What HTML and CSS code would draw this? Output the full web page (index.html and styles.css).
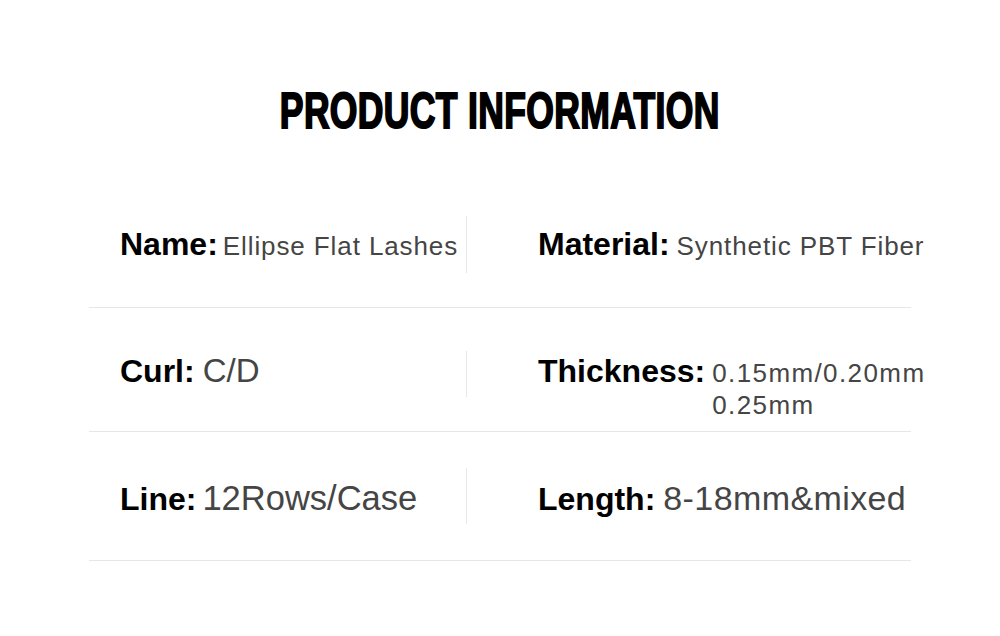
FILE: index.html
```html
<!DOCTYPE html>
<html lang="en">
<head>
<meta charset="utf-8">
<title>Product Information</title>
<link rel="stylesheet" href="styles.css">
</head>
<body>
<main class="page">
  <h1 class="title"><span class="title-text">PRODUCT INFORMATION</span></h1>
  <section class="table">
    <div class="row row-1">
      <div class="cell cell-left">
        <span class="label">Name:</span><span class="value v-name tight">Ellipse Flat Lashes</span>
      </div>
      <div class="cell cell-right">
        <span class="label">Material:</span><span class="value v-material">Synthetic PBT Fiber</span>
      </div>
    </div>
    <div class="row row-2">
      <div class="cell cell-left">
        <span class="label">Curl:</span><span class="value v-curl">C/D</span>
      </div>
      <div class="cell cell-right">
        <span class="label">Thickness:</span><span class="value v-thick tight">0.15mm/0.20mm<br>0.25mm</span>
      </div>
    </div>
    <div class="row row-3">
      <div class="cell cell-left">
        <span class="label">Line:</span><span class="value v-line">12Rows/Case</span>
      </div>
      <div class="cell cell-right">
        <span class="label">Length:</span><span class="value v-length">8-18mm&amp;mixed</span>
      </div>
    </div>
  </section>
</main>
</body>
</html>
```

FILE: styles.css
```css
html, body {
  margin: 0;
  padding: 0;
  background: #ffffff;
}

body {
  font-family: "Liberation Sans", Arial, sans-serif;
  color: #000;
}

.page {
  width: 1000px;
  height: 636px;
  padding-top: 81px;
  box-sizing: border-box;
}

.title {
  margin: 0 0 43px 0;
  text-align: center;
  font-size: 50px;
  line-height: 60px;
  font-weight: 700;
}

.title-text {
  display: inline-block;
  transform: scaleX(0.71);
  transform-origin: center;
  -webkit-text-stroke: 2px #000;
  letter-spacing: 0.5px;
}

.table {
  width: 822px;
  margin: 0 auto;
}

.row {
  display: grid;
  grid-template-columns: 378px 1fr;
  border-bottom: 1px solid #e6e6e6;
  align-items: start;
}

.row-1 { padding: 32px 0 34px; }
.row-2 { padding: 43px 0 34px; }
.row-3 { padding: 36px 0 36px; }

.cell {
  display: flex;
  align-items: baseline;
  box-sizing: border-box;
  overflow: visible;
}

.cell-left {
  padding-left: 31px;
  border-right: 1px solid #e8e8e8;
}

.cell-right {
  padding-left: 71px;
}

.row-1 .cell { height: 57px; padding-top: 10px; }
.row-2 .cell { height: 46px; padding-top: 2px; }
.row-3 .cell { height: 56px; padding-top: 12px; }

.label {
  font-size: 32px;
  line-height: 36px;
  font-weight: 700;
  color: #000;
  white-space: nowrap;
}

.value {
  color: #454545;
  margin-left: 8px;
  white-space: nowrap;
  line-height: 36px;
}

.value.tight {
  margin-left: 5px;
}

.v-name,
.v-material {
  font-size: 26px;
  letter-spacing: 0.9px;
}

.v-material {
  margin-left: 7px;
}

.v-curl {
  font-size: 33px;
}

.v-thick {
  font-size: 26px;
  line-height: 32px;
  letter-spacing: 1.4px;
  margin-left: 7px;
}

.v-thick.tight {
  margin-left: 7px;
}

.v-line {
  font-size: 34.5px;
  margin-left: 6px;
}

.v-length {
  font-size: 34px;
  letter-spacing: 0.4px;
}
```
